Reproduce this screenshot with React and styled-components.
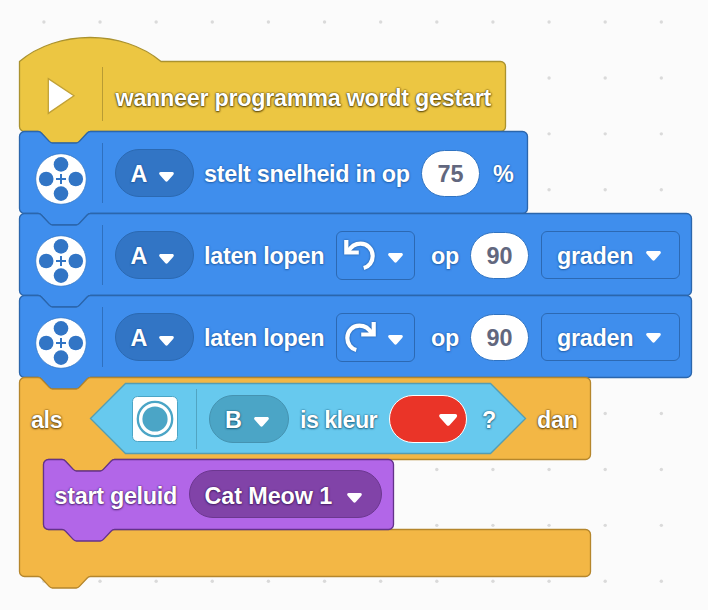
import React from "react";
import styled, { createGlobalStyle } from "styled-components";

const GlobalStyle = createGlobalStyle`
  html, body { margin: 0; padding: 0; }
  body { background: #fbfbfb; overflow: hidden; }
`;

const Workspace = styled.main`
  position: relative;
  box-sizing: border-box;
  width: 708px;
  height: 610px;
  padding: 37px 0 0 19px;
  overflow: hidden;
  font-family: "Liberation Sans", Arial, sans-serif;
  background: #fbfbfb;
`;

const GridDots = styled.svg`
  position: absolute;
  inset: 0;
`;

const Stack = styled.div`
  position: relative;
  isolation: isolate;
  display: flex;
  flex-direction: column;
  align-items: flex-start;
`;

const Block = styled.section`
  position: relative;
  display: flex;
  flex-direction: column;
  width: ${(p) => p.$w}px;
  height: ${(p) => p.$h}px;
  --shadow: ${(p) => p.$shadow};
`;

/* Outline drawing that lies beneath the block's content. */
const Outline = styled.svg`
  position: absolute;
  z-index: -1;
  top: 0;
  left: 0;
  overflow: visible;
`;

const Row = styled.div`
  position: relative;
  flex: none;
  display: flex;
  align-items: center;
  height: ${(p) => p.$h}px;
  margin-top: ${(p) => p.$mt || 0}px;
`;

const Label = styled.span`
  flex: none;
  width: ${(p) => p.$w}px;
  margin-left: ${(p) => p.$ml || 0}px;
  padding-top: ${(p) => p.$pt ?? 4}px;
  font-size: 23.4px;
  font-weight: 700;
  line-height: 27px;
  letter-spacing: ${(p) => p.$ls ?? -0.3}px;
  white-space: nowrap;
  color: #fff;
  text-shadow: var(--shadow);
`;

const Divider = styled.i`
  flex: none;
  width: 1px;
  height: ${(p) => p.$h}px;
  margin-left: ${(p) => p.$ml}px;
  margin-top: ${(p) => p.$mt || 0}px;
  background: ${(p) => p.$c};
`;

const Pill = styled.span`
  flex: none;
  display: flex;
  align-items: center;
  box-sizing: border-box;
  width: ${(p) => p.$w}px;
  height: ${(p) => p.$h || 48}px;
  margin-left: ${(p) => p.$ml}px;
  border: ${(p) => p.$bw || 1}px solid ${(p) => p.$border};
  border-radius: ${(p) => p.$r ?? 24}px;
  background: ${(p) => p.$bg || "transparent"};
`;

const NumberPill = styled(Pill).attrs({ $h: 47, $w: 59, $bg: "#fff", $border: "#2f73c2" })`
  justify-content: center;
  padding-top: 3px;
  color: #62677e;
  font-size: 23.4px;
  font-weight: 700;
  line-height: 27px;
`;

const IconSvg = styled.svg`
  flex: none;
  display: block;
  overflow: visible;
  margin-left: ${(p) => p.$ml || 0}px;
  margin-top: ${(p) => p.$mt || 0}px;
  filter: ${(p) => p.$glow || "none"};
`;

const NOTCH_R =
  "c1.6 0 2.6 .6 3.6 1.7 l7.6 8.2 c.9 1 1.7 1.6 3.1 1.6 h24 c1.4 0 2.2 -.6 3.1 -1.6 l7.6 -8.2 c1 -1.1 2 -1.7 3.6 -1.7";
const NOTCH_L =
  "c-1.6 0 -2.6 .6 -3.6 1.7 l-7.6 8.2 c-.9 1 -1.7 1.6 -3.1 1.6 h-24 c-1.4 0 -2.2 -.6 -3.1 -1.6 l-7.6 -8.2 c-1 -1.1 -2 -1.7 -3.6 -1.7";

const stackPath = (w, h) =>
  `M.5 5.5 a5 5 0 0 1 5 -5 H19 ${NOTCH_R} H${w - 5.5} a5 5 0 0 1 5 5 V${h - 4.5} a5 5 0 0 1 -5 5 H71.6 ${NOTCH_L} H5.5 a5 5 0 0 1 -5 -5 Z`;

const HAT_PATH = `M.5 24.5 C38 -7.5 104 -7.5 142 24.5 H481.5 a5 5 0 0 1 5 5 V89.5 a5 5 0 0 1 -5 5 H71.6 ${NOTCH_L} H5.5 a5 5 0 0 1 -5 -5 Z`;

const IF_PATH = `M.5 5.5 a5 5 0 0 1 5 -5 H19 ${NOTCH_R} H566.5 a5 5 0 0 1 5 5 V77.5 a5 5 0 0 1 -5 5 H95.6 ${NOTCH_L} H29.5 a5 5 0 0 0 -5 5 V147.5 a5 5 0 0 0 5 5 H566.5 a5 5 0 0 1 5 5 V194.5 a5 5 0 0 1 -5 5 H71.6 ${NOTCH_L} H5.5 a5 5 0 0 1 -5 -5 Z`;

function Shape({ d, fill, stroke }) {
  return (
    <Outline width="1" height="1">
      <path d={d} fill={fill} stroke={stroke} strokeWidth="1.3" />
    </Outline>
  );
}

function Caret({ ml, mt = 5, scale = 1 }) {
  return (
    <IconSvg width={15 * scale} height={10 * scale} viewBox="0 0 15 10" $ml={ml} $mt={mt}>
      <path
        d="M1.8 0 H13.2 C14.9 0 15.4 1.6 14.3 2.8 L8.8 9 Q7.5 10.4 6.2 9 L.7 2.8 C-.4 1.6 .1 0 1.8 0Z"
        fill="#fff"
      />
    </IconSvg>
  );
}

function MotorIcon() {
  return (
    <IconSvg width="52" height="52" viewBox="-26 -26 52 52" $ml={16} $mt={11}>
      <circle r="25.3" fill="#fff" stroke="#3479c9" strokeWidth=".8" />
      <g fill="#3275c5">
        <circle cy="-14.6" r="7.3" />
        <circle cy="14.6" r="7.3" />
        <circle cx="-14.8" r="7.3" />
        <circle cx="14.8" r="7.3" />
      </g>
      <path d="M-5 0H5M0 -5V5" stroke="#3275c5" strokeWidth="2" />
    </IconSvg>
  );
}

function TurnIcon({ clockwise }) {
  return (
    <IconSvg
      width="34"
      height="34"
      viewBox="0 0 34 34"
      $ml={6}
      $mt={1}
      $glow="drop-shadow(0 0 .8px #1f5799)"
    >
      <g
        transform={clockwise ? "translate(34 0) scale(-1 1)" : undefined}
        fill="none"
        stroke="#fff"
        strokeWidth="4.2"
      >
        <path d="M3.3 1V13.5H15.8" />
        <path d="M5 13C8 7.3 12.4 4.7 17.6 4.7C24.4 4.7 29.7 10 29.7 17C29.7 22.8 26 27.6 20.7 29" />
      </g>
    </IconSvg>
  );
}

function ColorSensorIcon() {
  return (
    <IconSvg width="46" height="46" viewBox="0 0 46 46" $ml={42}>
      <rect x=".5" y=".5" width="45" height="45" rx="5" fill="#fff" stroke="#4ba5c6" />
      <circle cx="23" cy="23" r="17.2" fill="#fff" stroke="#4ba5c6" strokeWidth="2.3" />
      <circle cx="23" cy="23" r="12.6" fill="#4ba5c6" />
    </IconSvg>
  );
}

const halo = (c) => `0 0 1px ${c}, 0 0 2px ${c}, 0 1px 2px ${c}`;
const BLUE = { fill: "#3f8eed", stroke: "#2b66ac", dark: "#3275c5", shadow: halo("rgba(25,80,150,.6)") };
const YELLOW = { fill: "#ecc642", stroke: "#aa922f", shadow: halo("rgba(70,55,0,.85)") };
const ORANGE = { fill: "#f3b745", stroke: "#b5862c", shadow: halo("rgba(85,55,0,.8)") };
const PURPLE = { fill: "#b266e8", stroke: "#64338a", shadow: halo("rgba(55,20,85,.65)") };
const CYAN_SHADOW = halo("rgba(20,80,110,.7)");

const Hexagon = styled.div`
  position: relative;
  z-index: 0;
  flex: none;
  display: flex;
  align-items: center;
  width: 436px;
  height: 71px;
  margin-left: 26px;
  --shadow: ${CYAN_SHADOW};
`;

const Substack = styled(Block)`
  z-index: 0;
  margin: -1px 0 0 24px;
`;

function PortPicker() {
  return (
    <Pill $w={79} $ml={12} $bg={BLUE.dark} $border="#2b69b2">
      <Label $w={17} $ml={14.5} $pt={3} $ls={0}>A</Label>
      <Caret ml={11} mt={7} />
    </Pill>
  );
}

function MotorBlock({ w, children }) {
  return (
    <Block $w={w} $h={82} $shadow={BLUE.shadow}>
      <Shape d={stackPath(w, 82)} fill={BLUE.fill} stroke={BLUE.stroke} />
      <Row $h={84}>
        <MotorIcon />
        <Divider $h={60} $ml={15} $c="#2f70bf" />
        <PortPicker />
        {children}
      </Row>
    </Block>
  );
}

function RunMotorBlock({ clockwise }) {
  return (
    <MotorBlock w={673}>
      <Label $w={123} $ml={10} $pt={3}>laten lopen</Label>
      <Pill $w={79} $h={49} $ml={9} $r={6} $border="#2c69b3">
        <TurnIcon clockwise={clockwise} />
        <Caret ml={11} mt={6} />
      </Pill>
      <Label $w={29} $ml={16} $pt={3}>op</Label>
      <NumberPill $ml={10}>90</NumberPill>
      <Pill $w={139} $ml={12} $r={6} $border="#2c69b3">
        <Label $w={77} $ml={15} $pt={3}>graden</Label>
        <Caret ml={12} mt={2} />
      </Pill>
    </MotorBlock>
  );
}

const dots = [];
for (let r = 0; r < 11; r++) {
  for (let c = 0; c < 12; c++) dots.push([43.9 + c * 56.13, 22 + r * 55.93]);
}

export default function App() {
  return (
    <>
      <GlobalStyle />
      <Workspace>
        <GridDots width="708" height="610">
          {dots.map(([x, y], i) => (
            <circle key={i} cx={x} cy={y} r="1.7" fill="#dadada" />
          ))}
        </GridDots>
        <Stack>
          <Block $w={487} $h={94} $shadow={YELLOW.shadow}>
            <Shape d={HAT_PATH} fill={YELLOW.fill} stroke={YELLOW.stroke} />
            <Row $h={70} $mt={24}>
              <IconSvg width="28" height="38" viewBox="0 0 28 38" $ml={28}>
                <path d="M1.3 1.6 L27 18.8 L1.3 36.4Z" fill="#fff" stroke="#c1a136" strokeWidth="1.3" />
              </IconSvg>
              <Divider $h={54} $ml={27} $mt={-4} $c="#b89b34" />
              <Label $w={378} $ml={12.5}>wanneer programma wordt gestart</Label>
            </Row>
          </Block>

          <MotorBlock w={509}>
            <Label $w={205} $ml={10} $pt={3}>stelt snelheid in op</Label>
            <NumberPill $ml={12}>75</NumberPill>
            <Label $w={22} $ml={13} $pt={3}>%</Label>
          </MotorBlock>

          <RunMotorBlock />
          <RunMotorBlock clockwise />

          <Block $w={572} $h={212} $shadow={ORANGE.shadow}>
            <Shape d={IF_PATH} fill={ORANGE.fill} stroke={ORANGE.stroke} />
            <Row $h={83}>
              <Label $w={33} $ml={12} $ls={-0.4}>als</Label>
              <Hexagon>
                <Outline width="1" height="1">
                  <path
                    d="M.5 35.5 L35.5 .5 H400.5 L435.5 35.5 L400.5 70.5 H35.5Z"
                    fill="#67c9ee"
                    stroke="#549db2"
                    strokeWidth="1.3"
                  />
                </Outline>
                <ColorSensorIcon />
                <Divider $h={60} $ml={18} $c="#51a4c2" />
                <Pill $w={80} $ml={12} $bg="#4ba5c6" $border="#4593b1">
                  <Label $w={17} $ml={15} $ls={0}>B</Label>
                  <Caret ml={12} mt={7} />
                </Pill>
                <Label $w={78} $ml={11} $ls={-0.6}>is kleur</Label>
                <Pill $w={78} $h={48} $ml={11} $bg="#ea3428" $border="#fff" $bw={1.5}>
                  <Caret ml={48.5} mt={4} scale={1.22} />
                </Pill>
                <Label $w={14} $ml={15}>?</Label>
              </Hexagon>
              <Label $w={43} $ml={11}>dan</Label>
            </Row>
            <Substack $w={351} $h={70} $shadow={PURPLE.shadow}>
              <Shape d={stackPath(351, 70)} fill={PURPLE.fill} stroke={PURPLE.stroke} />
              <Row $h={70}>
                <Label $w={122} $ml={11.5}>start geluid</Label>
                <Pill $w={193} $ml={12.5} $bg="#8143a8" $border="#6c3790">
                  <Label $w={128} $ml={14.5} $ls={-0.1}>Cat Meow 1</Label>
                  <Caret ml={14} mt={7} />
                </Pill>
              </Row>
            </Substack>
          </Block>
        </Stack>
      </Workspace>
    </>
  );
}
